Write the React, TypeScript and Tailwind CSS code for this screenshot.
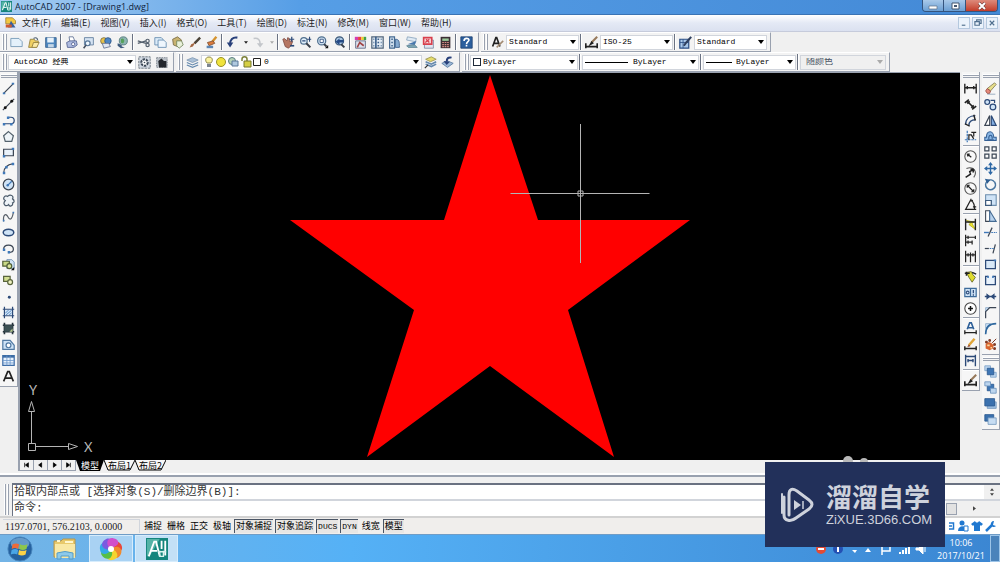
import { Fragment, ReactNode } from "react";
import clsx from "clsx";

const INK = "#3c4654";
const NAVY = "#2c4a78";
const BLUE = "#3f78b8";
const PALE = "#cfe3f6";

/* 16x16 toolbar glyphs */
const glyphs: Record<string, ReactNode> = {
  // standard toolbar
  New: <path d="M1 3h10l4 4v6H1z" fill="#e4f1fb" stroke="#6d93b3" />,
  Open: (
    <>
      <path d="M2 14L4 4h5l1 2h4l-2 8z" fill="#f0cf62" stroke="#8d7a3a" />
      <path d="M6 14l2-6h7l-3 6z" fill="#fbe9a4" stroke="#8d7a3a" />
      <path d="M8 3c3-2 5 0 5 2" fill="none" stroke="#567" strokeWidth="1.5" />
    </>
  ),
  Save: (
    <>
      <path d="M2 2h13v12H2z" fill="#4e86bd" stroke="#355f8c" />
      <path d="M4 2h8v6H4z" fill="#e8f2fa" />
      <path d="M5 10h7v4H5z" fill="#c4d6e6" />
    </>
  ),
  Plot: (
    <>
      <path d="M5 1h5l2 5-6 1z" fill="#fff" stroke="#5a6c90" />
      <path d="M2 8l4-2h8l1 5-4 3H3z" fill="#aebbe0" stroke="#4d5c8c" />
      <circle cx="10" cy="10" r="2" fill="#fff" stroke="#4d5c8c" />
    </>
  ),
  "Plot Preview": (
    <>
      <path d="M3 2h11v9H3z" fill="#d5e3f2" stroke="#5a7899" />
      <circle cx="7" cy="9" r="3" fill="#eef6fc" stroke="#5a7899" strokeWidth="1.5" />
      <path d="M5 11l-3 4" stroke="#454f5e" strokeWidth="2" />
    </>
  ),
  Publish: (
    <>
      <circle cx="6" cy="6" r="4" fill="#e8c34c" stroke="#776a3a" />
      <circle cx="11" cy="6" r="4" fill="#4d86c4" stroke="#2f5484" />
      <path d="M4 9h8l2 4-8 2z" fill="#dfe6f3" stroke="#5e6d8d" />
    </>
  ),
  "3D DWF": (
    <>
      <circle cx="9" cy="6" r="5" fill="#8fb5b2" stroke="#4f7678" />
      <path d="M6 4c2-2 5 0 4 3s-3 2-4 1z" fill="#56a05c" />
      <path d="M2 9l5 2v2l4 1-5 1-4-3z" fill="#3e5a7d" />
    </>
  ),
  Cut: (
    <>
      <path d="M1 6l10 3M1 9l10-3" stroke="#56616e" strokeWidth="1.5" />
      <circle cx="13" cy="6" r="2" fill="none" stroke="#56616e" strokeWidth="1.5" />
      <circle cx="13" cy="11" r="2" fill="none" stroke="#56616e" strokeWidth="1.5" />
    </>
  ),
  Copy: (
    <>
      <path d="M1 2h8l2 2v7H1z" fill="#dcebf8" stroke="#5f87ad" />
      <path d="M5 5h7l3 3v6H5z" fill="#eef6fd" stroke="#5f87ad" />
    </>
  ),
  Paste: (
    <>
      <path d="M2 4l6-3 5 4-5 8-5-2z" fill="#c9b370" stroke="#746540" />
      <path d="M7 6l6 0 2 5-5 4-3-3z" fill="#e9f1da" stroke="#6f8257" />
    </>
  ),
  "Match Properties": (
    <>
      <path d="M15 2L8 9" stroke="#4a4237" strokeWidth="3" />
      <path d="M9 8l-3 5-4 1 2-4z" fill="#a36642" />
    </>
  ),
  "Block Editor": (
    <>
      <path d="M14 1L9 7" stroke="#d5932e" strokeWidth="3" />
      <path d="M3 8l7-2 2 3-7 3z" fill="#dd7b3b" stroke="#7a4a2b" />
      <path d="M2 12h8v3H2z" fill="#5d86b4" />
    </>
  ),
  Undo: (
    <>
      <path d="M14 2C8 1 5 5 5 10" fill="none" stroke="#28407a" strokeWidth="2.5" />
      <path d="M1 8l4 6 4-6z" fill="#28407a" />
    </>
  ),
  Redo: (
    <>
      <path d="M2 3c6-1 8 2 8 7" fill="none" stroke="#c3c6ca" strokeWidth="2" />
      <path d="M6 9l4 5 4-5z" fill="#c3c6ca" />
    </>
  ),
  Pan: (
    <>
      <path d="M1 4l2-1 3 3 1-4 2 1 1 4 2-2 1 2-2 5-3 3-4-2z" fill="#b57662" stroke="#7c4a43" />
      <path d="M12 1v6M9 4h6" stroke={NAVY} strokeWidth="1.5" />
      <path d="M10 12h5" stroke={NAVY} strokeWidth="2" />
    </>
  ),
  "Zoom Realtime": (
    <>
      <circle cx="6" cy="6" r="4" fill="#e0effb" stroke="#51708f" strokeWidth="1.5" />
      <path d="M9 9l5 5" stroke="#383f4a" strokeWidth="2.5" />
      <path d="M13 1v6M10 4h5M4 6h4" stroke={NAVY} strokeWidth="1.3" />
    </>
  ),
  "Zoom Window": (
    <>
      <circle cx="7" cy="6" r="5" fill="#cfe2f3" stroke="#51708f" strokeWidth="1.5" />
      <path d="M5 4h4v4H5z" fill="#fff" stroke={NAVY} />
      <path d="M10 10l3 3" stroke="#383f4a" strokeWidth="2.5" />
      <path d="M15 11v4h-4z" fill="#111" />
    </>
  ),
  "Zoom Previous": (
    <>
      <circle cx="8" cy="6" r="5" fill="#a9c6e2" stroke="#3c5878" strokeWidth="1.5" />
      <path d="M10 10l4 4" stroke="#383f4a" strokeWidth="2.5" />
      <path d="M3 7l5-4v2h5v3H8v3z" fill="#254a86" />
    </>
  ),
  Properties: (
    <>
      <path d="M1 1h4v4H1z" fill="#d23db1" />
      <path d="M5 1h4v4H5z" fill="#e94040" />
      <path d="M9 1h3v4H9z" fill="#efcd2d" />
      <path d="M12 1h3v4h-3z" fill="#3fa049" />
      <path d="M2 6h12v9H2z" fill="#dbe1ee" stroke="#55607c" />
      <path d="M4 14l3-6 5 4" fill="none" stroke="#a04444" strokeWidth="2" />
    </>
  ),
  DesignCenter: (
    <>
      <path d="M1 1h14v14H1z" fill="#e4ecf4" stroke="#52667c" strokeWidth="1.5" />
      <path d="M6 1v14M8 4h2M12 4h1M8 8h2M12 8h1M8 12h2M12 12h1M3 4h1M3 8h1M3 12h1" stroke="#3a5f8a" strokeWidth="2" />
    </>
  ),
  "Tool Palettes": (
    <>
      <path d="M2 1h6v14H2z" fill="#d7e4f2" stroke="#466a91" strokeWidth="1.5" />
      <path d="M4 4h2M4 8h2M4 12h2" stroke="#466a91" strokeWidth="2" />
      <path d="M9 4c5 0 5 3 5 10H9z" fill="#86abd1" stroke="#335785" />
    </>
  ),
  "Sheet Set": (
    <>
      <path d="M3 1l11 2-1 4-11-2z" fill="#dfeaf4" stroke="#87a3bd" />
      <path d="M14 6L3 10l9 1z" fill="#4676ac" />
      <path d="M2 12l10-1 3 3H4z" fill="#7fa8b8" stroke="#59808f" />
    </>
  ),
  "Markup Set": (
    <>
      <path d="M3 5h11v10H3z" fill="#dfe5f0" stroke="#7a86a0" />
      <path d="M2 2h10v8H2z" fill="#f7d6da" stroke="#d8404d" strokeWidth="2" />
      <path d="M4 8l5-4M5 4l4 4" stroke="#d8404d" strokeWidth="1.5" />
    </>
  ),
  QuickCalc: (
    <>
      <path d="M2 1h12v14H2z" fill="#3d2f34" />
      <path d="M4 3h8v3H4z" fill="#9cc89a" />
      <path d="M4 8h2M7 8h2M10 8h2M4 10.5h2M7 10.5h2M10 10.5h2M4 13h2M7 13h2M10 13h2" stroke="#d78d86" strokeWidth="1.5" />
    </>
  ),
  Help: (
    <>
      <path d="M1 1h14v14H1z" fill="#2b5f9e" stroke="#1d4170" />
      <path d="M5 6c0-4 6-4 6-1 0 2-3 2-3 5M8 11v2" fill="none" stroke="#fff" strokeWidth="2" />
    </>
  ),
  "Text Style": (
    <>
      <path d="M2 13L6 2h1l4 11M4 9h6" fill="none" stroke="#222" strokeWidth="2" />
      <path d="M15 6l-6 6-2 2" stroke="#a38b72" strokeWidth="2" />
    </>
  ),
  "Dimension Style": (
    <>
      <path d="M1 9v6M15 9v6M1 13h14" stroke="#222" strokeWidth="2" />
      <path d="M15 1L8 8" stroke="#96785a" strokeWidth="2.5" />
      <path d="M8 6l3 3-7 4z" fill="#222" />
    </>
  ),
  "Table Style": (
    <>
      <path d="M1 4h11v11H1z" fill="#a9c8ea" stroke="#2c4f85" strokeWidth="1.5" />
      <path d="M1 8h11M5 4v11" stroke="#2c4f85" />
      <path d="M15 1l-6 7-3 4" stroke="#2f3f5f" strokeWidth="2.5" />
    </>
  ),
  // workspace and layers
  "Workspace Settings": (
    <>
      <path d="M1 1h14v14H1z" fill="#d4dbe4" stroke="#59636f" strokeDasharray="3 1" />
      <circle cx="8" cy="8" r="4" fill="#fff" stroke="#3e4a59" strokeWidth="2.5" strokeDasharray="3 1" />
      <circle cx="8" cy="8" r="1" fill="#3e4a59" />
    </>
  ),
  "My Workspace": (
    <>
      <path d="M2 2h13v12H2z" fill="#b9bfc6" stroke="#7a828c" strokeDasharray="2 1" />
      <path d="M4 6l4-3 3 3h3v8H5z" fill="#23272d" />
    </>
  ),
  "Layer Manager": (
    <>
      <path d="M1 5l7-3 7 3-7 3z" fill="#a9bfd6" stroke="#7d96b1" />
      <path d="M1 8l7 3 7-3M1 11l7 3 7-3" fill="none" stroke="#6489ae" strokeWidth="1.5" />
    </>
  ),
  "Layer Current": (
    <>
      <path d="M2 4l7-3 6 3-7 3z" fill="#e6dc6b" stroke="#97924f" />
      <path d="M2 7l7 3 6-3M2 10l7 3 6-3" fill="none" stroke="#6489ae" strokeWidth="2" />
      <path d="M1 15l4-4" stroke="#333" strokeWidth="1.5" />
    </>
  ),
  "Layer Previous": (
    <>
      <path d="M1 9l7-3 7 3-7 5z" fill="#9db9d8" stroke="#54779d" />
      <path d="M13 2c-4-1-6 1-6 5" fill="none" stroke="#28407a" strokeWidth="2.5" />
      <path d="M3 6l4 5 4-4z" fill="#28407a" />
    </>
  ),
  // draw
  Line: (
    <>
      <path d="M2 14L14 2" stroke={INK} strokeWidth="1.5" />
      <path d="M1 13h3v2H1zM12 1h3v2h-3z" fill={BLUE} />
    </>
  ),
  "Construction Line": (
    <>
      <path d="M1 15L15 1" stroke={INK} strokeWidth="1.5" />
      <circle cx="4" cy="12" r="1.8" fill="#111" />
      <circle cx="12" cy="4" r="1.8" fill="#111" />
    </>
  ),
  Polyline: (
    <>
      <path d="M2 12h9a4 4 0 000-8H8" fill="none" stroke={NAVY} strokeWidth="1.5" />
      <path d="M1 11h3v3H1zM10 11h3v3h-3zM6 3h3v3H6z" fill={BLUE} />
    </>
  ),
  Polygon: <path d="M8 2l6 5-2 7H4L2 7z" fill="#eef4f8" stroke="#53616c" strokeWidth="1.5" />,
  Rectangle: (
    <>
      <path d="M2 4h12v8H2z" fill="#eaf2fa" stroke={INK} strokeWidth="1.5" />
      <path d="M1 11h3v3H1zM12 2h3v3h-3z" fill={BLUE} />
    </>
  ),
  Arc: (
    <>
      <path d="M2 14C2 7 7 3 14 2" fill="none" stroke={INK} strokeWidth="1.5" />
      <path d="M1 12h3v3H1zM4 5h3v3H4zM12 1h3v3h-3z" fill={BLUE} />
    </>
  ),
  Circle: (
    <>
      <circle cx="8" cy="8" r="6.5" fill={PALE} stroke={INK} strokeWidth="1.5" />
      <path d="M7 9l5-5" stroke={BLUE} strokeWidth="1.5" />
      <circle cx="7" cy="9" r="1.5" fill={BLUE} />
    </>
  ),
  "Revision Cloud": (
    <path d="M4 8C0 6 3 1 7 3c3-3 8-1 6 3 3 2 2 5 0 5 1 4-4 5-5 2-3 3-8 0-4-5z" fill="#eef3f7" stroke="#4c5b6b" strokeWidth="1.5" />
  ),
  Spline: (
    <>
      <path d="M2 14C1 5 5 4 7 8s5 6 7-5" fill="none" stroke="#596069" strokeWidth="1.5" />
      <path d="M1 12h2v2H1zM13 2h2v2h-2z" fill={BLUE} />
    </>
  ),
  Ellipse: <ellipse cx="8" cy="8" rx="6.5" ry="4" fill={PALE} stroke={NAVY} strokeWidth="1.8" />,
  "Ellipse Arc": (
    <>
      <path d="M2 9c0-7 12-7 12 0 0 3-3 4-6 4" fill="none" stroke={INK} strokeWidth="1.5" />
      <path d="M1 8h3v3H1zM7 11h3v3H7z" fill={BLUE} />
    </>
  ),
  "Insert Block": (
    <>
      <path d="M6 2h6l3 3v8H6z" fill={PALE} stroke="#6587aa" />
      <path d="M1 4h8v6H1z" fill="#c8d985" stroke="#505e35" strokeWidth="1.5" />
      <circle cx="9" cy="10" r="3" fill="#d9e49a" stroke="#505e35" strokeWidth="1.5" />
      <path d="M15 11v4h-4z" fill="#111" />
    </>
  ),
  "Make Block": (
    <>
      <path d="M2 3h8v6H2z" fill="#d3df91" stroke="#59643c" strokeWidth="1.5" />
      <circle cx="10" cy="10" r="3" fill="#eef1bf" stroke="#59643c" strokeWidth="1.5" />
    </>
  ),
  Point: <circle cx="9" cy="9" r="1.8" fill={NAVY} />,
  Hatch: (
    <>
      <path d="M3 1v14M13 1v14M1 4h14M1 12h14" stroke={NAVY} strokeWidth="1.5" />
      <path d="M4 5h8v6H4z" fill={PALE} />
      <path d="M4 9l4-4M5 11l7-6M9 11l3-3" stroke={BLUE} />
    </>
  ),
  Gradient: (
    <>
      <path d="M3 1v14M13 1v14M1 4h14M1 12h14" stroke="#26333c" strokeWidth="2" />
      <path d="M3 4h10v8H3z" fill="#3d5154" />
      <path d="M9 12l4-4v4z" fill="#b4c68c" />
    </>
  ),
  Region: (
    <>
      <path d="M1 3h9l5 6v5H1z" fill={PALE} stroke="#527aa3" strokeWidth="1.5" />
      <circle cx="8" cy="9" r="3" fill="#fff" stroke="#527aa3" strokeWidth="1.5" />
    </>
  ),
  Table: (
    <>
      <path d="M1 2h14v12H1z" fill="#e8f2fd" stroke="#3c6ca6" strokeWidth="1.5" />
      <path d="M1 3h14" stroke="#3c6ca6" strokeWidth="3" />
      <path d="M1 8h14M1 11h14M6 2v12M10 2v12" stroke="#6d97cb" />
    </>
  ),
  "Multiline Text": <path d="M2 14L7 2h2l5 12M4 10h8" fill="none" stroke="#222" strokeWidth="2" />,
  // dimension
  Linear: <path d="M1 2v12M15 2v12M1 7h14M4 5v4M12 5v4" stroke="#222" strokeWidth="1.7" />,
  Aligned: <path d="M1 6l5-4M10 14l5-4M4 4l8 8M4 7l3-3M9 12l3-3" stroke="#222" strokeWidth="2" />,
  "Arc Length": (
    <>
      <path d="M2 13C2 6 7 2 14 2M6 14c0-4 3-7 8-7" fill="none" stroke={NAVY} strokeWidth="1.7" />
      <path d="M1 12l6 3M12 1l2 7" stroke="#222" strokeWidth="1.7" />
    </>
  ),
  Ordinate: (
    <>
      <path d="M4 1v14M1 12h14" stroke={BLUE} strokeWidth="1.5" strokeDasharray="3 1" />
      <path d="M6 12V6h3l3 5M12 3v5M9 3h6" fill="none" stroke="#222" strokeWidth="1.5" />
    </>
  ),
  Radius: (
    <>
      <circle cx="8" cy="8" r="7" fill="#f8f8f8" stroke="#555" strokeWidth="1.3" />
      <path d="M9 9L4 5M4 5l1 3M4 5h3" stroke="#222" strokeWidth="1.5" />
    </>
  ),
  Jogged: (
    <>
      <path d="M3 3c9-3 14 4 9 11" fill="none" stroke="#555" strokeWidth="1.3" />
      <path d="M2 14l6-4-1-3 5-3M12 4l-4 0M12 4l-1 4" fill="none" stroke="#222" strokeWidth="1.8" />
    </>
  ),
  Diameter: (
    <>
      <circle cx="8" cy="8" r="7" fill="#f8f8f8" stroke="#555" strokeWidth="1.3" />
      <path d="M4 4l8 8M4 4v3M4 4h3M12 12V9M12 12H9" stroke="#222" strokeWidth="1.5" />
    </>
  ),
  Angular: <path d="M9 1L2 14h13M9 3c3 2 4 6 4 11M7 4l4-1M11 11l4 0" fill="none" stroke="#222" strokeWidth="1.5" />,
  "Quick Dimension": (
    <>
      <path d="M3 3l9 2-2 2 4 7-8-6 2-1z" fill="#efe62c" stroke="#b5ac22" />
      <path d="M2 1v14M14 1v14M2 5h12" stroke="#222" strokeWidth="1.7" />
    </>
  ),
  Baseline: <path d="M2 1v14M2 4h12M14 2v4M2 10h8M10 8v5M5 2v4M5 8v4" stroke="#222" strokeWidth="1.5" />,
  Continue: <path d="M2 1v14M8 3v12M14 1v14M2 6h12M5 4v4M11 4v4" stroke="#222" strokeWidth="1.5" />,
  Leader: (
    <>
      <path d="M3 3l6-1 2 4 3 3-4 6-4-6z" fill="#dfdb2f" stroke="#5c5f21" />
      <path d="M1 4h6M3 2v5M10 3l5 2" stroke="#222" strokeWidth="1.8" />
    </>
  ),
  Tolerance: (
    <>
      <path d="M1 3h14v10H1z" fill={PALE} stroke="#3e6c9b" strokeWidth="1.5" />
      <path d="M8 3v10" stroke="#3e6c9b" strokeWidth="1.5" />
      <circle cx="4.5" cy="8" r="1.7" fill="none" stroke={NAVY} strokeWidth="1.3" />
      <path d="M11.5 5v4M11.5 10v2" stroke={NAVY} strokeWidth="1.5" />
    </>
  ),
  "Center Mark": (
    <>
      <circle cx="8" cy="8" r="7" fill="#fff" stroke="#444" strokeWidth="1.3" />
      <path d="M8 5v6M5 8h6" stroke="#111" strokeWidth="1.8" />
    </>
  ),
  "Dimension Edit": (
    <>
      <path d="M4 9l3-8h2l3 8M5 7h6" fill="none" stroke="#2d5f98" strokeWidth="2" />
      <path d="M1 10v5M15 10v5M1 13h14" stroke="#222" strokeWidth="1.6" />
    </>
  ),
  "Dimension Text Edit": (
    <>
      <path d="M1 10v5M15 10v5M1 13h14" stroke="#222" strokeWidth="1.8" />
      <path d="M13 1L6 9" stroke="#e0a63a" strokeWidth="3" />
      <path d="M6 8l2 2-4 1z" fill="#8b3d22" />
    </>
  ),
  "Dimension Update": <path d="M2 1v14M14 1v14M2 3h12M4 8h8M5 6v4M11 6v4" stroke={NAVY} strokeWidth="1.7" />,
  // modify
  Erase: (
    <>
      <path d="M13 1l2 2-7 8-4-3z" fill="#e8df8c" stroke="#7e7a54" />
      <path d="M8 11l-4-3-2 3 2 3h3z" fill="#e68a7b" stroke="#95473c" />
      <path d="M4 15h10" stroke="#8aa1b9" />
    </>
  ),
  "Copy Object": (
    <>
      <circle cx="4" cy="5" r="3" fill={PALE} stroke={NAVY} strokeWidth="1.5" />
      <circle cx="11" cy="11" r="3.5" fill={PALE} stroke={NAVY} strokeWidth="1.5" />
      <path d="M8 3h5v3" fill="none" stroke={NAVY} strokeWidth="1.5" />
    </>
  ),
  Mirror: (
    <>
      <path d="M7 2v12H1z" fill="#fff" stroke={INK} strokeWidth="1.4" />
      <path d="M9 2v12h6z" fill="#82ade0" stroke={NAVY} strokeWidth="1.4" />
    </>
  ),
  Offset: (
    <>
      <path d="M1 13h14V9h-3c0-9-9-9-9 0H1z" fill="#8ab7e5" stroke="#345f93" strokeWidth="1.3" />
      <path d="M4 12h8M6 11c-1-6 5-6 4 0" fill="none" stroke="#345f93" strokeWidth="1.4" />
    </>
  ),
  Array: <path d="M1 1h5v5H1zM10 1h5v5h-5zM1 10h5v5H1zM10 10h5v5h-5z" fill="#fafafa" stroke="#3b4756" strokeWidth="1.5" />,
  Move: (
    <>
      <path d="M8 2v12M2 8h12" stroke="#2e68a5" strokeWidth="1.7" />
      <path d="M8 0l3 4H5zM8 16l3-4H5zM0 8l4-3v6zM16 8l-4-3v6z" fill="#2e68a5" />
    </>
  ),
  Rotate: (
    <>
      <path d="M4 4a6 6 0 109 1" fill="none" stroke="#48759f" strokeWidth="2" />
      <path d="M4 4c3-3 7-2 9 1" fill="none" stroke="#48759f" strokeWidth="1.5" />
      <path d="M1 1l7 1-4 5z" fill="#2f5f92" />
    </>
  ),
  Scale: (
    <>
      <path d="M2 1h13v13H2z" fill={PALE} stroke="#6c8dad" strokeWidth="1.3" />
      <path d="M2 8h7v6H2z" fill="#fff" stroke="#3e5c7e" strokeWidth="1.5" />
    </>
  ),
  Stretch: (
    <>
      <path d="M2 1h5v13H2z" fill="#fff" stroke={INK} strokeWidth="1.3" />
      <path d="M7 1l8 13H7z" fill="#b9d3ee" stroke="#456b93" strokeWidth="1.3" />
    </>
  ),
  Trim: (
    <>
      <path d="M5 13L10 2" stroke={INK} strokeWidth="1.5" />
      <path d="M0 8h6" stroke={BLUE} strokeWidth="1.7" />
      <path d="M9 8h7" stroke={BLUE} strokeWidth="1.5" strokeDasharray="2 1" />
    </>
  ),
  Extend: (
    <>
      <path d="M11 14l3-11" stroke={INK} strokeWidth="1.5" />
      <path d="M1 8h5" stroke={INK} strokeWidth="1.5" />
      <path d="M7 8h5" stroke={BLUE} strokeWidth="1.5" strokeDasharray="2 1" />
    </>
  ),
  "Break at Point": (
    <>
      <path d="M2 3h12v10H2z" fill="#d8e8f7" stroke={NAVY} strokeWidth="1.5" />
      <path d="M12 2h3v2h-3z" fill={BLUE} />
    </>
  ),
  Break: (
    <>
      <path d="M5 3H2v10h12V3h-3" fill="#e9f2fb" stroke={NAVY} strokeWidth="1.6" />
      <path d="M4 2h2v3H4zM10 2h2v3h-2z" fill={BLUE} />
    </>
  ),
  Join: (
    <>
      <path d="M1 8h14" stroke={NAVY} strokeWidth="1.8" />
      <path d="M8 8L3 4v8zM8 8l5-4v8z" fill={NAVY} />
    </>
  ),
  Chamfer: (
    <>
      <path d="M2 7V2h5z" fill={PALE} stroke="#8ba8c6" />
      <path d="M2 15V7l5-5h8" fill="none" stroke={INK} strokeWidth="1.5" />
    </>
  ),
  Fillet: (
    <>
      <path d="M2 8V2h6z" fill={PALE} stroke="#8ba8c6" />
      <path d="M2 15C2 6 6 2 15 2" fill="none" stroke="#2f689f" strokeWidth="2" />
    </>
  ),
  Explode: (
    <>
      <path d="M2 7l4-2 3 1 3 3-1 4-4 2-5-2z" fill="#d9652f" />
      <path d="M10 6l5-5M2 4h2v2H2zM6 2h2v2H6zM12 7h2v2h-2zM12 12h2v2h-2z" fill="#a34e2b" stroke="#7a3420" strokeWidth="1.2" />
      <path d="M4 8h3v2H4zM8 11h2v2H8z" fill="#f7d9a2" />
    </>
  ),
  // draw order
  "Bring to Front": (
    <>
      <path d="M1 1h7v6H1zM8 9h7v6H8z" fill="#bcd5ee" stroke="#7ea2c8" />
      <path d="M4 4h8v8H4z" fill="#3e75b3" stroke="#29588f" />
    </>
  ),
  "Send to Back": (
    <>
      <path d="M4 4h8v8H4z" fill="#3e75b3" stroke="#29588f" />
      <path d="M1 1h7v5H1zM8 9h7v6H8z" fill="#bcd5ee" stroke="#6d93bd" />
    </>
  ),
  "Bring Above": (
    <>
      <path d="M4 6h11v8H4z" fill="#9ebfe1" stroke="#7396bc" />
      <path d="M1 2h12v9H1z" fill="#3b71ae" stroke="#29588f" />
    </>
  ),
  "Send Under": (
    <>
      <path d="M1 2h11v8H1z" fill="#3b71ae" stroke="#29588f" />
      <path d="M5 6h10v8H5z" fill="#c6dcf2" stroke="#7396bc" />
    </>
  ),
};

function ToolButton({ name }: { name: string }) {
  return (
    <button aria-label={name} className="flex h-4 w-[17px] shrink-0 items-center justify-center">
      <svg viewBox="0 0 16 16" className="size-[13px] shrink-0" aria-hidden="true">
        {glyphs[name]}
      </svg>
    </button>
  );
}

function Separator() {
  return <span className="mx-px h-4 w-[2px] shrink-0 border-l border-gray-500 bg-white" />;
}

function Grip() {
  return (
    <span className="mx-px flex h-4 w-[5px] shrink-0 gap-px">
      <i className="w-[2px] border-r border-gray-400 bg-white" />
      <i className="w-[2px] border-r border-gray-400 bg-white" />
    </span>
  );
}

function Bar({ children }: { children: ReactNode }) {
  return (
    <div className="flex h-full items-center border-t border-r border-b border-gray-400 border-t-white bg-[#f3f3f3] pr-[3px] pl-px">
      {children}
    </div>
  );
}

interface ComboProps {
  label: string;
  value: string;
  width: string;
  pad?: string;
  disabled?: boolean;
  children?: ReactNode;
}

function Combo({ label, value, width, pad = "pl-[5px]", disabled, children }: ComboProps) {
  return (
    <div className={clsx("relative flex h-[15px] shrink-0 items-center", width)}>
      <select
        aria-label={label}
        disabled={disabled}
        className={clsx(
          "h-full w-full appearance-none border border-gray-300 font-['Liberation_Mono','Noto_Sans_CJK_SC',monospace] leading-none",
          disabled ? "bg-[#f0f0f0] text-[9px] text-gray-600 opacity-100" : "bg-white text-[8px] text-black",
          pad
        )}
      >
        <option>{value}</option>
      </select>
      <div className="pointer-events-none absolute inset-y-0 left-[3px] flex items-center">{children}</div>
      <svg viewBox="0 0 6 4" className="pointer-events-none absolute right-[3px] h-1 w-[6px]">
        <path d="M0 0h6L3 4z" fill={disabled ? "#aaa" : "#000"} />
      </svg>
    </div>
  );
}

function DropArrow({ label, muted }: { label: string; muted?: boolean }) {
  return (
    <button aria-label={label} className="flex h-4 w-[9px] items-center justify-center">
      <svg viewBox="0 0 6 4" className="h-[3px] w-1">
        <path d="M0 0h6L3 4z" fill={muted ? "#aaa" : "#222"} />
      </svg>
    </button>
  );
}

function AppLogo({ className }: { className: string }) {
  return (
    <svg viewBox="0 0 24 24" className={className} aria-hidden="true">
      <path d="M0 0h24v24H0z" fill="#15857c" />
      <path d="M1 1h14L4 20H1z" fill="#54b3a6" />
      <path d="M3 20L9 4h2l4 16M6 14h6M17 3v9M21 3v16" fill="none" stroke="#fff" strokeWidth="2" />
      <path d="M13 15h9M15 14v6h4v-6" fill="none" stroke="#d8f3ee" strokeWidth="1.5" />
    </svg>
  );
}

const menus = ["文件(F)", "编辑(E)", "视图(V)", "插入(I)", "格式(O)", "工具(T)", "绘图(D)", "标注(N)", "修改(M)", "窗口(W)", "帮助(H)"];

function TitleBar() {
  return (
    <header className="flex h-[15px] shrink-0 items-start border-b border-[#3a73b4] bg-linear-to-r from-[#a5cdf1] via-[#569ee6] via-30% to-[#4389d6] pl-px">
      <AppLogo className="mt-px size-[11px]" />
      <h1 className="flex-1 pl-[3px] font-['Open_Sans',sans-serif] text-[9px] leading-[14px] text-[#10243c]">
        AutoCAD 2007 - [Drawing1.dwg]
      </h1>
      <div className="mr-[2px] flex h-3 overflow-hidden rounded-b border border-t-0 border-[#35547d] text-white">
        <button aria-label="Minimize" className="flex w-[21px] items-center justify-center border-r border-[#35547d] bg-linear-to-b from-[#a9c9e9] to-[#6b9fd3]">
          <svg viewBox="0 0 10 8" className="h-2 w-[10px]"><path d="M1 4h8v3H1z" fill="#fff" stroke="#5d6f85" strokeWidth=".7" /></svg>
        </button>
        <button aria-label="Restore" className="flex w-[22px] items-center justify-center border-r border-[#35547d] bg-linear-to-b from-[#a9c9e9] to-[#6b9fd3]">
          <svg viewBox="0 0 10 8" className="h-2 w-[10px]"><path d="M2 1h7v6H2z" fill="#fff" stroke="#44566e" /><path d="M4 3h3v2H4z" fill="#44566e" /></svg>
        </button>
        <button aria-label="Close" className="flex w-[31px] items-center justify-center bg-linear-to-b from-[#dd8a7b] to-[#c23a28]">
          <svg viewBox="0 0 10 8" className="h-2 w-[10px]"><path d="M2 1l6 6M8 1L2 7" stroke="#5c3030" strokeWidth="3" /><path d="M2 1l6 6M8 1L2 7" stroke="#fff" strokeWidth="2" /></svg>
        </button>
      </div>
    </header>
  );
}

function MenuBar() {
  const docButtons = [
    { label: "Minimize drawing", d: "M2 7h4" },
    { label: "Restore drawing", d: "M3 3V1h5v4H6M1 3h5v4H1z" },
    { label: "Close drawing", d: "M2 2l5 5M7 2L2 7" },
  ];
  return (
    <nav className="flex h-[17px] shrink-0 items-center border-b border-[#c6cbdb] bg-linear-to-b from-white via-[#e4e9f5] to-[#dbe1f0] pl-[5px]">
      <svg viewBox="0 0 16 16" className="size-3" aria-hidden="true">
        <path d="M1 1h9l4 4v4H1z" fill="#f2c740" stroke="#9a7b2f" />
        <path d="M4 14L8 5l6 9z" fill="#385f9c" />
        <path d="M1 10h8v4H1z" fill="#cf5a2f" />
      </svg>
      <div className="flex flex-1">
        {menus.map((menu) => (
          <button key={menu} className="px-[5px] font-['Noto_Sans_CJK_SC',sans-serif] text-[9px] leading-4 text-[#1c1c24]">
            {menu}
          </button>
        ))}
      </div>
      <div className="mr-[2px] flex gap-[2px]">
        {docButtons.map((b) => (
          <button key={b.label} aria-label={b.label} className="flex size-3 items-center justify-center border border-[#b4c8de] bg-[#eaf2fb]">
            <svg viewBox="0 0 9 9" className="size-2"><path d={b.d} fill="none" stroke="#51708f" strokeWidth="1.3" /></svg>
          </button>
        ))}
      </div>
    </nav>
  );
}

const standardTools = [
  ["New", "Open", "Save"],
  ["Plot", "Plot Preview", "Publish", "3D DWF"],
  ["Cut", "Copy", "Paste", "Match Properties", "Block Editor"],
];

const viewTools = [
  ["Pan", "Zoom Realtime", "Zoom Window", "Zoom Previous"],
  ["Properties", "DesignCenter", "Tool Palettes", "Sheet Set", "Markup Set", "QuickCalc"],
];

function StandardRow() {
  return (
    <div className="flex h-5 shrink-0 gap-[2px]">
      <Bar>
        <Grip />
        {standardTools.map((group, i) => (
          <Fragment key={i}>
            {group.map((name) => <ToolButton key={name} name={name} />)}
            <Separator />
          </Fragment>
        ))}
        <ToolButton name="Undo" />
        <DropArrow label="Undo list" />
        <ToolButton name="Redo" />
        <DropArrow label="Redo list" muted />
        <Separator />
        {viewTools.map((group, i) => (
          <Fragment key={i}>
            {group.map((name) => <ToolButton key={name} name={name} />)}
            <Separator />
          </Fragment>
        ))}
        <ToolButton name="Help" />
      </Bar>
      <Bar>
        <Grip />
        <ToolButton name="Text Style" />
        <Combo label="Text style" value="Standard" width="w-[73px]" pad="pl-[2px]" />
        <Separator />
        <ToolButton name="Dimension Style" />
        <Combo label="Dimension style" value="ISO-25" width="w-[73px]" pad="pl-[2px]" />
        <Separator />
        <ToolButton name="Table Style" />
        <Combo label="Table style" value="Standard" width="w-[73px]" pad="pl-[2px]" />
      </Bar>
    </div>
  );
}

function PropertiesRow() {
  return (
    <div className="flex h-5 shrink-0 gap-[2px]">
      <Bar>
        <Grip />
        <Combo label="Workspace" value="AutoCAD 经典" width="w-[128px]" />
        <ToolButton name="Workspace Settings" />
        <ToolButton name="My Workspace" />
      </Bar>
      <Bar>
        <Grip />
        <ToolButton name="Layer Manager" />
        <Combo label="Layer" value="0" width="w-[221px]" pad="pl-[62px]">
          <svg viewBox="0 0 58 12" className="h-3 w-[58px]">
            <path d="M5 1c4 0 4 4 2 6H3C1 5 1 1 5 1z" fill="#fbf3a0" stroke="#8c8648" />
            <path d="M3 8h4v3H3z" fill="#7c8590" />
            <circle cx="17" cy="6" r="4.5" fill="#f0e33c" stroke="#98912b" />
            <circle cx="28" cy="5" r="3.5" fill="#b6d3b6" stroke="#5b7d84" />
            <path d="M28 5h6v5h-6z" fill="#b0c9df" stroke="#5a7998" />
            <path d="M38 5V3c0-3 5-3 5 0v3" fill="none" stroke="#7b8039" strokeWidth="1.5" />
            <path d="M40 5h7v6h-7z" fill="#d5cf45" stroke="#76782e" />
            <path d="M49.5 2.5h7v7h-7z" fill="#fff" stroke="#222" />
          </svg>
        </Combo>
        <ToolButton name="Layer Current" />
        <ToolButton name="Layer Previous" />
      </Bar>
      <Bar>
        <Grip />
        <Combo label="Color" value="ByLayer" width="w-[108px]" pad="pl-[12px]">
          <span className="size-2 border border-gray-800 bg-white" />
        </Combo>
        <Separator />
        <Combo label="Linetype" value="ByLayer" width="w-[117px]" pad="pl-[50px]">
          <span className="h-px w-[43px] bg-black" />
        </Combo>
        <Separator />
        <Combo label="Lineweight" value="ByLayer" width="w-[93px]" pad="pl-[32px]">
          <span className="h-px w-[26px] bg-black" />
        </Combo>
        <Separator />
        <Combo label="Plot style" value="随颜色" width="w-[86px]" disabled />
      </Bar>
    </div>
  );
}

function SideBar({ groups }: { groups: string[][] }) {
  return (
    <div className="flex w-[18px] flex-col items-center border-r border-b border-gray-400 bg-[#f6f6f6] pb-[2px]">
      <div className="my-[2px] flex h-1 w-4 flex-col gap-px">
        <i className="h-[2px] border-b border-gray-400 bg-white" />
        <i className="h-[2px] border-b border-gray-400 bg-white" />
      </div>
      {groups.map((group, i) => (
        <Fragment key={group[0]}>
          {i > 0 && <span className="my-px h-[2px] w-4 border-t border-gray-400 bg-white" />}
          {group.map((name) => <ToolButton key={name} name={name} />)}
        </Fragment>
      ))}
    </div>
  );
}

const drawTools = [["Line", "Construction Line", "Polyline", "Polygon", "Rectangle", "Arc", "Circle", "Revision Cloud", "Spline", "Ellipse", "Ellipse Arc", "Insert Block", "Make Block", "Point", "Hatch", "Gradient", "Region", "Table", "Multiline Text"]];

const dimensionTools = [
  ["Linear", "Aligned", "Arc Length", "Ordinate"],
  ["Radius", "Jogged", "Diameter", "Angular"],
  ["Quick Dimension", "Baseline", "Continue"],
  ["Leader", "Tolerance", "Center Mark"],
  ["Dimension Edit", "Dimension Text Edit", "Dimension Update"],
  ["Dimension Style"],
];

const modifyTools = [["Erase", "Copy Object", "Mirror", "Offset", "Array", "Move", "Rotate", "Scale", "Stretch", "Trim", "Extend", "Break at Point", "Break", "Join", "Chamfer", "Fillet", "Explode"]];

const orderTools = [["Bring to Front", "Send to Back", "Bring Above", "Send Under"]];

function Drawing() {
  return (
    <svg viewBox="0 0 940 387" className="min-h-0 w-full flex-1 bg-black" role="img" aria-label="Drawing1.dwg">
      <path d="M470 2l48 145h152l-122 90 46 147-124-91-123 91 47-147L270 147h154z" fill="#f00" />
      <g stroke="#b4b4b4" fill="none">
        <path d="M560.5 51v139M490.5 120.5h139" />
        <path d="M558 118h5v5h-5z" />
        <path d="M8.5 370.5h7v7h-7zM11.5 370V339M16 373.5h32M8.5 338.5h6l-3-10zM48.5 370.5v6l9-3z" />
      </g>
      <text x="9" y="322" fill="#b8b8b8" className="font-['Lato',sans-serif] text-[13px]">Y</text>
      <text x="64" y="379" fill="#b8b8b8" className="font-['Lato',sans-serif] text-[13px]">X</text>
    </svg>
  );
}

function LayoutTabs() {
  const nav = [
    { label: "First tab", d: "M2 1v6M7 1v6L3 4z" },
    { label: "Previous tab", d: "M6 1v6L2 4z" },
    { label: "Next tab", d: "M3 1v6l4-3z" },
    { label: "Last tab", d: "M7 1v6M2 1v6l4-3z" },
  ];
  return (
    <div className="flex h-[11px] shrink-0 items-stretch bg-[#f0f0f0] font-['Noto_Sans_CJK_SC',sans-serif] text-[9px] leading-[10px]">
      {nav.map((n) => (
        <button key={n.label} aria-label={n.label} className="flex w-[14px] items-center justify-center border-r border-b border-gray-400">
          <svg viewBox="0 0 9 8" className="h-[6px] w-[7px]"><path d={n.d} stroke="#000" /></svg>
        </button>
      ))}
      <button className="relative w-[28px] text-white">
        <svg viewBox="0 0 28 11" preserveAspectRatio="none" className="absolute inset-0 size-full"><path d="M0 0h28l-4 11H4z" /></svg>
        <span className="relative">模型</span>
      </button>
      {["布局1", "布局2"].map((tab) => (
        <button key={tab} className="relative w-[31px] text-black">
          <svg viewBox="0 0 31 11" preserveAspectRatio="none" className="absolute inset-0 size-full"><path d="M0 0l4 10h22l5-10" fill="#f6f6f6" stroke="#000" /></svg>
          <span className="relative">{tab}</span>
        </button>
      ))}
    </div>
  );
}

function CommandPanel() {
  return (
    <section className="flex h-[41px] shrink-0 border-t-2 border-gray-400 bg-[#f0f0f0] pt-[6px]">
      <div className="flex w-3 shrink-0 justify-center gap-px py-px">
        <i className="w-[2px] border-r border-gray-400 bg-white" />
        <i className="w-[2px] border-r border-gray-400 bg-white" />
      </div>
      <div className="flex flex-1 flex-col border-t-2 border-l border-gray-500 bg-white font-['Liberation_Mono','Noto_Sans_CJK_SC',monospace] text-[11px] leading-[14px] text-[#333]">
        <div className="flex h-4 border-b-2 border-gray-300">
          <output className="flex-1 overflow-hidden pl-px whitespace-nowrap">拾取内部点或 [选择对象(S)/删除边界(B)]:</output>
          <div className="flex w-4 flex-col items-center justify-between bg-[#f0f0f0] py-[3px]">
            <svg viewBox="0 0 6 4" className="h-[3px] w-1"><path d="M0 4h6L3 0z" fill="#444" /></svg>
            <svg viewBox="0 0 6 4" className="h-[3px] w-1"><path d="M0 0h6L3 4z" fill="#444" /></svg>
          </div>
        </div>
        <div className="flex h-[15px]">
          <label htmlFor="command" className="shrink-0 pl-px">命令:</label>
          <input id="command" className="min-w-0 flex-1 outline-none" />
          <div className="flex w-[54px] items-center gap-4 bg-[#f0f0f0]">
            <span className="h-3 w-[11px] border border-gray-400 bg-[#e2e2e2]" />
            <svg viewBox="0 0 4 6" className="h-[5px] w-[3px]"><path d="M0 0v6l4-3z" fill="#444" /></svg>
          </div>
        </div>
      </div>
    </section>
  );
}

const modes = [
  { label: "捕捉", on: false },
  { label: "栅格", on: false },
  { label: "正交", on: false },
  { label: "极轴", on: false },
  { label: "对象捕捉", on: true },
  { label: "对象追踪", on: true },
  { label: "DUCS", on: true },
  { label: "DYN", on: true },
  { label: "线宽", on: false },
  { label: "模型", on: true },
];

function StatusBar() {
  return (
    <footer className="flex h-[18px] shrink-0 items-center border-t-2 border-[#d2d2d2] bg-[#f0eeec] pl-[3px]">
      <div className="h-[14px] w-[137px] border-t border-r border-gray-300 pl-[2px] font-['Liberation_Serif',serif] text-[10px] leading-[14px] text-[#222]">
        1197.0701, 576.2103, 0.0000
      </div>
      <div className="flex flex-1 gap-[2px] pl-[2px]">
        {modes.map((m) => (
          <button
            key={m.label}
            aria-pressed={m.on}
            className={clsx(
              "h-[14px] border-t border-l px-px font-['Liberation_Mono','Noto_Sans_CJK_SC',monospace] leading-3",
              /[A-Z]/.test(m.label) ? "text-[8px]" : "text-[9px]",
              m.on ? "border-gray-600 bg-[#e8e6e4]" : "border-transparent"
            )}
          >
            {m.label}
          </button>
        ))}
      </div>
      <div className="flex h-full w-[54px] items-center justify-between bg-white px-[3px]">
        <svg viewBox="0 0 8 12" className="h-3 w-[6px]"><path d="M0 2h6v8H0M0 6h4" fill="none" stroke="#2078d0" strokeWidth="2" /></svg>
        <svg viewBox="0 0 12 12" className="size-3"><circle cx="5" cy="3" r="2.5" fill="#2078d0" /><path d="M1 11c0-6 8-6 8-1v1z" fill="#2078d0" /><path d="M7 6h4v5H7z" fill="#fff" stroke="#2078d0" /></svg>
        <svg viewBox="0 0 12 12" className="size-3"><path d="M4 1c1 2 3 2 4 0l4 3-2 2-1-1v6H3V5L2 6 0 4z" fill="#2078d0" /></svg>
        <svg viewBox="0 0 12 12" className="size-3"><path d="M1 11l6-6" stroke="#2078d0" strokeWidth="2.5" /><path d="M9 1a3 3 0 102 5L8 5z" fill="#2078d0" /></svg>
      </div>
    </footer>
  );
}

const petals = ["#e9473b", "#f08a2c", "#f4d42f", "#57bf45", "#35a9e6", "#7a5be0", "#d14ecb"];

function TaskBar() {
  return (
    <div className="flex h-7 shrink-0 items-center border-t border-[#6f9cc6] bg-linear-to-r from-[#73b4e6] via-[#55b1f6] via-35% to-[#3b86d2]">
      <button aria-label="Start" className="flex w-10 justify-center">
        <svg viewBox="0 0 28 28" className="size-[26px]">
          <circle cx="14" cy="14" r="13" fill="#25619f" stroke="#4886bd" />
          <ellipse cx="14" cy="8" rx="10" ry="6" fill="#8fc0e4" opacity=".6" />
          <path d="M6 9q4-2 7 0l-1 5q-3-2-7 0z" fill="#ee6a37" />
          <path d="M14 9q4 2 8 0l-1 5q-4 2-8 0z" fill="#8ec649" />
          <path d="M5 15q4-2 7 0l-1 5q-3-2-7 0z" fill="#4aa5e6" />
          <path d="M13 15q4 2 8 0l-1 5q-4 2-8 0z" fill="#fbd147" />
        </svg>
      </button>
      <button aria-label="Explorer" className="flex w-[49px] justify-center">
        <svg viewBox="0 0 24 22" className="h-[22px] w-6">
          <path d="M1 3h7l2-2h12v18H1z" fill="#e8c96c" stroke="#b8964a" />
          <path d="M2 6h20v14H2z" fill="#f9e8a5" />
          <path d="M4 3h3M12 4h8" stroke="#fff6cf" strokeWidth="2" />
          <path d="M4 21v-6q8-3 16 0v6h-4v-3H8v3z" fill="#8cc9ea" stroke="#549cc6" />
        </svg>
      </button>
      <button aria-label="Browser" className="flex h-full w-11 items-center justify-center border border-[#d6ecfc] bg-[#a9d2f3]">
        <svg viewBox="-12 -12 24 24" className="size-6">
          {petals.map((fill, i) => (
            <path key={fill} d="M0 0C-6-3-6-11 1-11 7-11 8-6 5-4z" fill={fill} transform={`rotate(${i * 51 + 60})`} />
          ))}
          <circle r="3" fill="#fff" />
        </svg>
      </button>
      <button aria-label="AutoCAD 2007" className="ml-[2px] flex h-full w-[43px] items-center justify-center border border-[#d6ecfc] bg-[#c3e0f6]">
        <AppLogo className="size-[22px]" />
      </button>
      <div className="flex flex-1 items-center justify-end pr-[7px]">
        <svg viewBox="0 0 112 12" className="h-3 w-28" aria-hidden="true">
          <circle cx="6" cy="6" r="5" fill="#e24b36" />
          <path d="M3 6h6" stroke="#fff" strokeWidth="2" />
          <circle cx="23" cy="6" r="5" fill="#2450b4" />
          <path d="M23 3v6" stroke="#fff" strokeWidth="2" />
          <path d="M37 7h5l-2 3zM50 9h6l-3-4z" fill="#fff" />
          <path d="M67 2v10M67 3h8v5h-8" fill="none" stroke="#fff" strokeWidth="1.5" />
          <path d="M85 11V9M88 11V7M91 11V5M94 11V3" stroke="#fff" strokeWidth="2" />
          <path d="M101 5h3l4-4v10l-4-4h-3zM110 3v6" fill="#fff" stroke="#fff" />
        </svg>
      </div>
      <time className="w-[54px] text-center font-['Open_Sans',sans-serif] text-[9px] leading-[13px] text-white">
        10:06
        <br />
        2017/10/21
      </time>
      <button aria-label="Show desktop" className="ml-[2px] h-full w-[10px] border border-[#9cc4e8] bg-[#4a83bb]" />
    </div>
  );
}

function Watermark() {
  return (
    <aside className="absolute right-[55px] bottom-[15px] flex h-[85px] w-[180px] items-center gap-3 bg-[#22305a] pl-[15px] text-[#ced2dc]">
      <svg viewBox="0 0 34 36" className="h-9 w-[34px] shrink-0" aria-hidden="true">
        <g fill="none" stroke="#ced2dc" strokeWidth="3" strokeLinecap="round">
          <path d="M9 28V8c0-6 3-7 8-4l12 9c4 3 4 6 0 9L16 31c-5 4-12 3-12-3V10" />
          <path d="M2 7v19" strokeWidth="2" />
        </g>
        <path d="M14 13v10l7-5z" fill="#ced2dc" />
        <path d="M23 14v8" stroke="#ced2dc" strokeWidth="1.5" />
      </svg>
      <div className="whitespace-nowrap">
        <p className="font-['Liberation_Sans','Noto_Sans_CJK_SC',sans-serif] text-[26px] leading-[30px] font-bold">溜溜自学</p>
        <p className="font-['Liberation_Sans',sans-serif] text-[13px] leading-[14px]">ZiXUE.3D66.COM</p>
      </div>
    </aside>
  );
}

export default function App() {
  return (
    <div className="relative flex h-screen flex-col overflow-hidden bg-[#f0f0f0]">
      <TitleBar />
      <MenuBar />
      <StandardRow />
      <PropertiesRow />
      <main className="flex min-h-0 flex-1">
        <div className="flex w-5 shrink-0 items-start border-r-2 border-gray-400">
          <SideBar groups={drawTools} />
        </div>
        <div className="flex min-w-0 flex-1 flex-col border-t border-gray-400">
          <Drawing />
          <LayoutTabs />
        </div>
        <div className="flex w-10 shrink-0 items-start justify-end gap-[2px]">
          <SideBar groups={dimensionTools} />
          <div>
            <SideBar groups={modifyTools} />
            <SideBar groups={orderTools} />
          </div>
        </div>
      </main>
      <div className="h-1 shrink-0 border-b-2 border-white" />
      <CommandPanel />
      <StatusBar />
      <TaskBar />
      <svg viewBox="0 0 30 12" className="absolute right-[129px] bottom-[95px] h-3 w-[30px]" aria-hidden="true">
        <circle cx="7" cy="6" r="5" fill="#b9b9b9" />
        <circle cx="23" cy="7" r="4" fill="#b9b9b9" />
      </svg>
      <Watermark />
    </div>
  );
}
